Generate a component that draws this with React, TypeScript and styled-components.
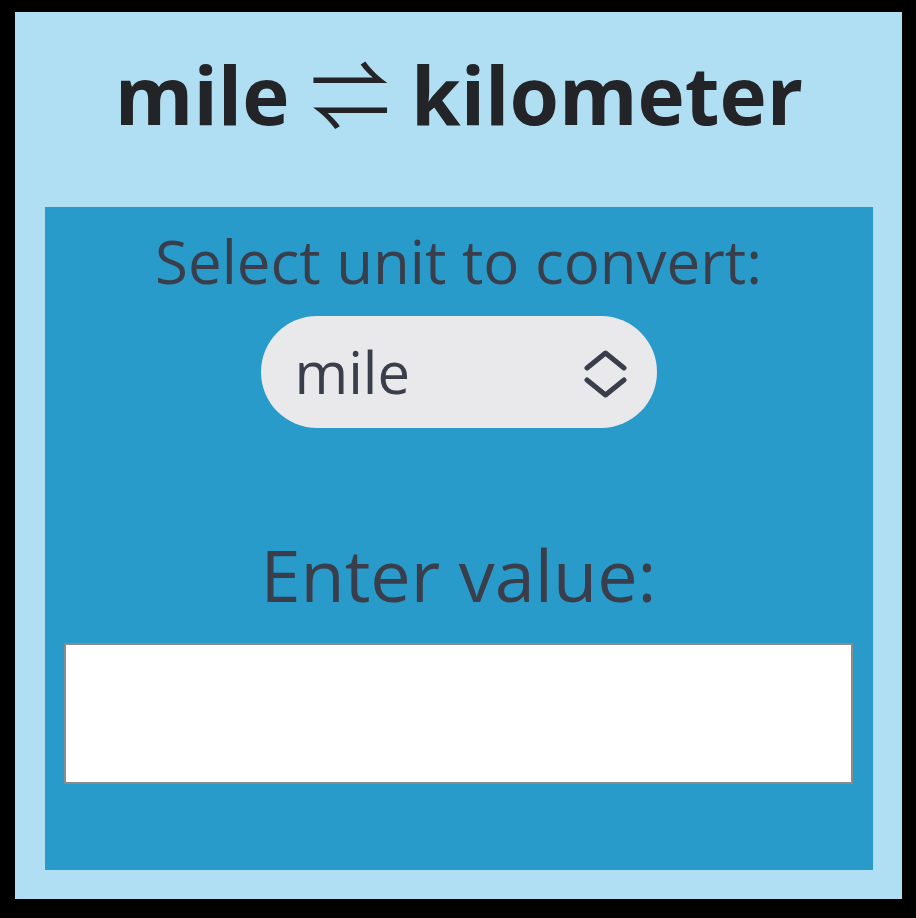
import { useState } from "react";
import styled, { createGlobalStyle } from "styled-components";

const Global = createGlobalStyle`
	html, body {
		margin: 0;
		padding: 0;
		background: #000;
	}
	body {
		font-family: "Open Sans", "Noto Sans", sans-serif;
	}
`;

const Frame = styled.div`
	width: 887px;
	height: 887px;
	margin: 12px 0 0 15px;
	padding: 42px 29px 29px 30px;
	box-sizing: border-box;
	background: #b0dff3;
	display: flex;
	flex-direction: column;
`;

const Title = styled.h1`
	margin: 0 0 73px;
	height: 80px;
	font-size: 80px;
	line-height: 1;
	font-weight: 700;
	color: #232428;
	text-align: center;
	white-space: nowrap;
`;

const Arrows = styled.span`
	font-weight: 400;
	font-size: 80px;
	line-height: 0;
	font-family: "Noto Sans CJK JP", "DejaVu Sans", sans-serif;
`;

const Panel = styled.div`
	flex: 1;
	background: #289bcb;
	padding: 24px 20px 0 19px;
	display: flex;
	flex-direction: column;
	align-items: center;
`;

const Label = styled.label<{ $size: number }>`
	font-size: ${(p) => p.$size}px;
	line-height: 1;
	color: #3a3e4a;
	text-align: center;
`;

const SelectWrap = styled.div`
	position: relative;
	margin: 25px 0 110px;
	width: 396px;
	height: 112px;
`;

const Select = styled.select`
	appearance: none;
	width: 100%;
	height: 100%;
	border: none;
	border-radius: 56px;
	background: #e9e9ec;
	color: #3a3e4a;
	font-family: inherit;
	font-size: 58px;
	padding: 0 0 2px 34px;
	outline: none;
`;

const Chevrons = styled.svg`
	position: absolute;
	right: 30px;
	top: 32px;
	pointer-events: none;
`;

const Input = styled.input`
	margin-top: 33px;
	width: 100%;
	height: 141px;
	box-sizing: border-box;
	border: 2px solid #8b8b8b;
	background: #fff;
	font-family: inherit;
	font-size: 48px;
	padding: 0 12px;
	outline: none;
`;

export default function App(): JSX.Element {
	const [unit, setUnit] = useState("mile");
	const [value, setValue] = useState("");

	return (
		<>
			<Global />
			<Frame>
				<Title>
					mile <Arrows>⇌</Arrows> kilometer
				</Title>
				<Panel>
					<Label $size={60} htmlFor="unit">
						Select unit to convert:
					</Label>
					<SelectWrap>
						<Select
							id="unit"
							value={unit}
							onChange={(e) => {
								setUnit(e.target.value);
							}}
						>
							<option value="mile">mile</option>
							<option value="kilometer">kilometer</option>
						</Select>
						<Chevrons width="44" height="50" viewBox="0 0 44 50">
							<path
								d="M4 20 L22.5 5 L41 20 M4 32 L22.5 47 L41 32"
								fill="none"
								stroke="#3a3e4a"
								strokeWidth="5"
								strokeLinecap="round"
								strokeLinejoin="round"
							/>
						</Chevrons>
					</SelectWrap>
					<Label $size={72} htmlFor="value">
						Enter value:
					</Label>
					<Input
						id="value"
						type="number"
						value={value}
						onChange={(e) => {
							setValue(e.target.value);
						}}
					/>
				</Panel>
			</Frame>
		</>
	);
}
